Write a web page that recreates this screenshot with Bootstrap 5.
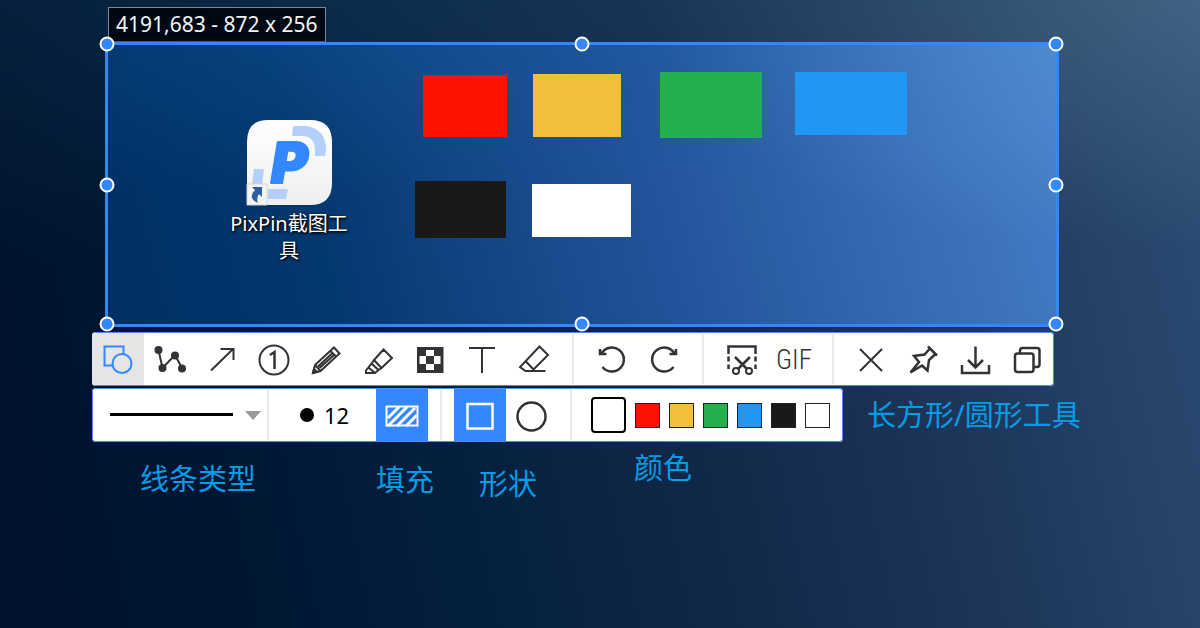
<!DOCTYPE html>
<html lang="zh-CN">
<head>
<meta charset="utf-8">
<meta name="viewport" content="width=device-width, initial-scale=1">
<title>PixPin</title>
<link href="https://cdn.jsdelivr.net/npm/bootstrap@5.3.0/dist/css/bootstrap.min.css" rel="stylesheet">
<style>
  :root { --pin-blue: #3388ff; --ink: #333; }
  body { font-family: "Noto Sans", "Noto Sans CJK SC", sans-serif; background: #00122e; }
  .desktop {
    background:
      radial-gradient(ellipse 50% 45% at 103% -5%, rgba(110,140,165,.38), rgba(110,140,165,0)),
      radial-gradient(ellipse 110% 50% at 45% -5%, rgba(30,75,105,.35), rgba(30,75,105,0)),
      linear-gradient(78deg, #00112c 0%, #001733 20%, #041f3e 36%, #102847 54%, #1c3558 74%, #2d4d75 100%);
    padding-top: 7px;
  }
  /* capture area */
  .size-tip { margin-left: 108px; height: 35px; padding: 0 7px; font-size: 21px; line-height: 32px; color: #f4f4f4; background: rgba(0,5,12,.88); border: 1px solid #7d8791; border-bottom-color: #4c565f; }
  .selection {
    margin: 0 141px 0 105px; height: 285px; border: 3px solid var(--pin-blue);
    background:
      radial-gradient(ellipse 45% 80% at 103% -10%, rgba(100,165,230,.4), rgba(100,165,230,0)),
      radial-gradient(ellipse 80% 70% at 35% -15%, rgba(20,90,160,.4), rgba(20,90,160,0)),
      linear-gradient(76deg, #002f64 0%, #03376f 22%, #144686 40%, #22539a 56%, #3467ad 76%, #467ec8 100%);
  }
  .grip { width: 15px; height: 15px; border: 2px solid #fff; border-radius: 50%; background: var(--pin-blue); transform: translate(-50%, -50%); z-index: 2; }
  .t0 { top: -1px; } .t50 { top: 50%; } .t100 { top: 100%; }
  .l0 { left: -1px; } .l50 { left: 50%; } .l100 { left: 100%; }
  .swatch-box { position: absolute; }
  .bx-red { left: 315px; top: 30px; width: 84px; height: 62px; }
  .bx-yellow { left: 425px; top: 29px; width: 88px; height: 63px; }
  .bx-green { left: 552px; top: 27px; width: 102px; height: 66px; }
  .bx-blue { left: 687px; top: 27px; width: 112px; height: 63px; }
  .bx-black { left: 307px; top: 136px; width: 91px; height: 57px; }
  .bx-white { left: 424px; top: 139px; width: 99px; height: 53px; }
  .c-red { background: #ff1100; } .c-yellow { background: #f1bf3a; } .c-green { background: #24b14d; }
  .c-blue { background: #2196f3; } .c-black { background: #191919; } .c-white { background: #fff; }
  .shortcut { position: absolute; left: 116px; top: 75px; width: 130px; color: #fff; font-size: 20px; line-height: 27px; text-shadow: 1px 1px 2px #000, 0 1px 3px #000; word-break: break-all; }
  .shortcut-name { margin-top: 4px; }
  .logo-letter { text-shadow: none; }
  /* toolbars */
  .bars { margin: 5px 0 0 92px; gap: 2px; }
  .bar { height: 54px; background: #fff; border-radius: 4px; box-shadow: inset 0 0 0 1px #4b8eee; overflow: hidden; }
  .tool { width: 52px; height: 52px; padding: 2px 0 0; border: 0; border-radius: 0; background: transparent; color: var(--ink); }
  .tool svg { width: 36px; height: 36px; fill: none; stroke: currentColor; stroke-width: 2; }
  .tool.picked { background: #e5e5e5; color: var(--pin-blue); }
  .tool.filled { background: var(--pin-blue); color: #fff; }
  .tool-text { font-family: "Roboto Condensed", Roboto, sans-serif; font-weight: 300; font-size: 27px; line-height: 48px; }
  .rule { width: 2px; height: 50px; margin: 0 12px; background: #e8e8e8; }
  .line-kind {
    width: 175px; height: 50px; border: 0; appearance: none; margin-left: 1px;
    background: linear-gradient(#000, #000) 17px 23px / 123px 3px no-repeat,
      url("data:image/svg+xml,%3Csvg xmlns='http://www.w3.org/2000/svg' width='16' height='9'%3E%3Cpath d='M0 0h16L8 9z' fill='%23999'/%3E%3C/svg%3E") 152px 21px no-repeat, #fff;
  }
  .rule-tight { width: 2px; height: 50px; margin-left: -1px; background: #e8e8e8; }
  .thickness { width: 107px; padding-left: 31px; gap: 10px; }
  .dot { width: 14px; height: 14px; border-radius: 50%; background: #000; }
  .thickness input { width: 40px; border: 0; padding: 0; font-size: 22px; line-height: 30px; color: #000; background: transparent; }
  .palette { padding: 0 13px 0 7px; gap: 9px; }
  .chip { width: 25px; height: 25px; padding: 0; border: 1px solid #222; border-radius: 0; }
  .chip-now { width: 35px; height: 36px; border: 2px solid #000; border-radius: 4px; }
  /* captions */
  .note { color: #059ce6; font-size: 29px; line-height: 36px; white-space: nowrap; }
  .n-tool { margin-left: 24px; }
  .n-line { left: 48px; top: 129px; } .n-fill { left: 284px; top: 130px; }
  .n-shape { left: 387px; top: 134px; } .n-color { left: 542px; top: 118px; }
</style>
</head>
<body>
<main class="desktop min-vh-100 overflow-hidden">
  <div class="d-flex"><div class="size-tip text-nowrap">4191,683 - 872 x 256</div></div>

  <section class="selection position-relative" aria-label="截图区域">
    <div class="shortcut text-center">
      <svg class="d-block mx-auto" width="86" height="86" viewBox="0 0 86 86" aria-hidden="true">
        <defs><linearGradient id="tile" x1="0" y1="0" x2="0" y2="1"><stop offset="0" stop-color="#fff"/><stop offset="1" stop-color="#efefef"/></linearGradient></defs>
        <path d="M22 0H64Q86 0 86 22V63Q86 85 64 85H1V22Q1 0 22 0Z" fill="url(#tile)"/>
        <path d="M47 6H59Q80 8 80 30L79 36H69V30Q69 17 57 16H46Z" fill="#b3d0fa"/>
        <path d="M8 49H18L16 65H6ZM22 69H42L40 79H22Z" fill="#b3d0fa"/>
        <text class="logo-letter" x="25" y="63" font-family="Inter" font-size="56" font-weight="900" font-style="italic" fill="#3388ff" stroke="#3388ff" stroke-width="2" stroke-linejoin="round">P</text>
        <path d="M1 64H21V85H1Z" fill="#f4f4f4" stroke="#d4d4d4"/>
        <path d="M6 67H16V77L13 74Q10 78 12 83Q1 78 9 70Z" fill="#2d5f9e"/>
      </svg>
      <div class="shortcut-name">PixPin截图工具</div>
    </div>
    <div class="swatch-box bx-red c-red"></div>
    <div class="swatch-box bx-yellow c-yellow"></div>
    <div class="swatch-box bx-green c-green"></div>
    <div class="swatch-box bx-blue c-blue"></div>
    <div class="swatch-box bx-black c-black"></div>
    <div class="swatch-box bx-white c-white"></div>
    <span class="grip position-absolute t0 l0"></span><span class="grip position-absolute t0 l50"></span><span class="grip position-absolute t0 l100"></span>
    <span class="grip position-absolute t50 l0"></span><span class="grip position-absolute t50 l100"></span>
    <span class="grip position-absolute t100 l0"></span><span class="grip position-absolute t100 l50"></span><span class="grip position-absolute t100 l100"></span>
  </section>

  <div class="bars position-relative d-flex flex-column align-items-start">
    <div class="bar d-flex align-items-center" role="toolbar" aria-label="标注工具">
      <button type="button" class="btn tool picked" aria-label="形状"><svg viewBox="0 0 36 36"><path d="M13 23.500H4.500V4.500H23.500V12"/><circle cx="22" cy="21.500" r="9.500"/></svg></button>
      <button type="button" class="btn tool" aria-label="折线"><svg viewBox="0 0 36 36"><path d="M6.500 8L10.500 26L23 13L30 26"/><g fill="currentColor" stroke="none"><circle cx="6.500" cy="8" r="4"/><circle cx="10.500" cy="26" r="4"/><circle cx="23" cy="13.500" r="4"/><circle cx="30" cy="26.500" r="4"/></g></svg></button>
      <button type="button" class="btn tool" aria-label="箭头"><svg viewBox="0 0 36 36"><path d="M7 28.500L29 7M16.500 7H29.500V18"/></svg></button>
      <button type="button" class="btn tool" aria-label="序号"><svg viewBox="0 0 36 36"><circle cx="18" cy="18" r="14.500"/><path d="M14 13L18.500 10V27" stroke-width="2.500"/></svg></button>
      <button type="button" class="btn tool" aria-label="铅笔"><svg viewBox="0 0 36 36"><path d="M5 31L7 23L26 5.500L31.500 11.500L12.500 29ZM22.500 9L28 14.500M7 23L12.500 29M10 24.500L24.500 11M11.500 26L26 13"/><path d="M5 31L6 27L9 30Z" fill="currentColor"/></svg></button>
      <button type="button" class="btn tool" aria-label="荧光笔"><svg viewBox="0 0 36 36"><path d="M14 18L23.500 7.500L32 16L21.500 26L14 18ZM14 18L11.500 21.500L18.500 28L21.500 26M11.500 21.500L6 28.500V31H15L18.500 28M8.500 25.500L14.500 30.500"/></svg></button>
      <button type="button" class="btn tool" aria-label="马赛克"><svg viewBox="0 0 36 36"><path d="M5 5H31.500V31H5Z" fill="currentColor" stroke="none"/><path d="M14 8H22V14H14ZM14 22H22V28H14ZM7.500 14H14V22H7.500ZM22 14H28.500V22H22Z" fill="#fff" stroke="none"/></svg></button>
      <button type="button" class="btn tool" aria-label="文字"><svg viewBox="0 0 36 36"><path d="M5 6H31M18 6V31"/></svg></button>
      <button type="button" class="btn tool" aria-label="橡皮擦"><svg viewBox="0 0 36 36"><path d="M29.500 29H9.500L4 25L23.500 4.500L32 13L17.500 27.500M9.500 19L18 28"/></svg></button>
      <span class="rule"></span>
      <button type="button" class="btn tool" aria-label="撤销"><svg viewBox="0 0 36 36"><path d="M7.500 11.500A12 12 0 1 1 8.500 25M6 7V12H12.500" stroke-width="2.500"/></svg></button>
      <button type="button" class="btn tool" aria-label="重做"><svg viewBox="0 0 36 36"><path d="M28.500 11.500A12 12 0 1 0 27.500 25M30 7V12H23.500" stroke-width="2.500"/></svg></button>
      <span class="rule"></span>
      <button type="button" class="btn tool" aria-label="长截图"><svg viewBox="0 0 36 36"><path d="M4.500 12V4.500H31.500V12M4.500 14.500V19.500M31.500 14.500V19.500M4.500 22.500V27M31.500 22.500V27M11 15L23 27M26 15L14 27" stroke-width="2.500"/><circle cx="12" cy="29" r="3"/><circle cx="25" cy="29" r="3"/></svg></button>
      <button type="button" class="btn tool tool-text">GIF</button>
      <span class="rule"></span>
      <button type="button" class="btn tool" aria-label="关闭"><svg viewBox="0 0 36 36"><path d="M6 7L28 29M28 7L6 29"/></svg></button>
      <button type="button" class="btn tool" aria-label="贴图"><svg viewBox="0 0 36 36"><path d="M22 4.500L31 13.500M24 6.500L18.500 12.500L8 14L13 20L4.500 30.500L16 23.500L21.500 28.500L23 18L29.500 12" stroke-width="2.500"/></svg></button>
      <button type="button" class="btn tool" aria-label="保存"><svg viewBox="0 0 36 36"><path d="M17.500 4.500V25M10 18L17.500 25.500L25 18M4 23V31H31V23" stroke-width="2.500"/></svg></button>
      <button type="button" class="btn tool" aria-label="复制"><svg viewBox="0 0 36 36"><g stroke-width="2.500"><rect x="5" y="11.500" width="18.500" height="18.500" rx="2.500"/><path d="M10 11.500V9Q10 6 12.500 6H27Q29.500 6 29.500 8.500V22.500Q29.500 25 27 25H24"/></g></svg></button>
    </div>

    <div class="d-flex align-items-center">
      <div class="bar d-flex align-items-center" role="toolbar" aria-label="形状选项">
        <select class="line-kind" aria-label="线条类型"><option value="solid"></option></select>
        <span class="rule-tight"></span>
        <div class="thickness d-flex align-items-center"><span class="dot"></span><input type="text" value="12" aria-label="线宽"></div>
        <button type="button" class="btn tool filled" aria-label="填充"><svg viewBox="0 0 36 36"><path d="M2.500 8.500H33.500V27.500H2.500Z"/><path d="M4 20L15 9M4 28L23 9M13 28L31 10M22 28L33 17" stroke-width="3"/></svg></button>
        <span class="rule"></span>
        <button type="button" class="btn tool filled" aria-label="长方形"><svg viewBox="0 0 36 36"><path d="M5.500 6H30.500V30.500H5.500Z" stroke-width="2.500"/></svg></button>
        <button type="button" class="btn tool" aria-label="圆形"><svg viewBox="0 0 36 36"><circle cx="17.500" cy="18.500" r="14" stroke-width="2.500"/></svg></button>
        <span class="rule"></span>
        <div class="palette d-flex align-items-center">
          <button type="button" class="btn chip chip-now c-white" aria-label="当前颜色"></button>
          <button type="button" class="btn chip c-red" aria-label="红"></button>
          <button type="button" class="btn chip c-yellow" aria-label="黄"></button>
          <button type="button" class="btn chip c-green" aria-label="绿"></button>
          <button type="button" class="btn chip c-blue" aria-label="蓝"></button>
          <button type="button" class="btn chip c-black" aria-label="黑"></button>
          <button type="button" class="btn chip c-white" aria-label="白"></button>
        </div>
      </div>
      <div class="note n-tool">长方形/圆形工具</div>
    </div>

    <div class="note n-line position-absolute">线条类型</div>
    <div class="note n-fill position-absolute">填充</div>
    <div class="note n-shape position-absolute">形状</div>
    <div class="note n-color position-absolute">颜色</div>
  </div>
</main>
<script src="https://cdn.jsdelivr.net/npm/bootstrap@5.3.0/dist/js/bootstrap.bundle.min.js"></script>
</body>
</html>
